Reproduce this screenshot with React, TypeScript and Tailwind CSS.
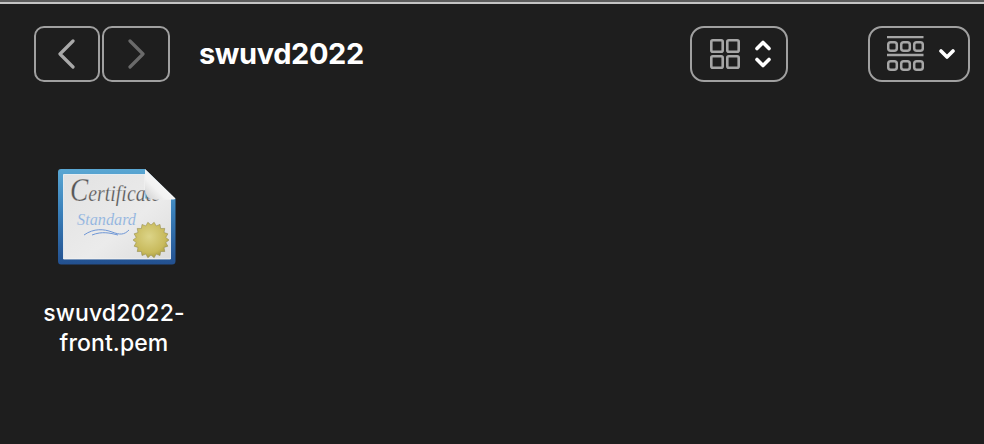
import React from "react";

function Nav({ dir, color, className }: { dir: "l" | "r"; color: string; className: string }) {
  return (
    <div className={`flex items-center justify-center border-2 border-[#a0a0a0] rounded-[10px] h-[56px] ${className}`}>
      <svg width="18" height="30" viewBox="0 0 18 30" fill="none">
        <path d={dir === "l" ? "M15 2 L2 15 L15 28" : "M3 2 L16 15 L3 28"} stroke={color} strokeWidth="3.2" strokeLinecap="round" strokeLinejoin="round" />
      </svg>
    </div>
  );
}

function GridIcon() {
  return (
    <svg width="30" height="30" viewBox="0 0 30 30" fill="none" stroke="#a6a6a6" strokeWidth="2.6">
      <rect x="1.3" y="1.3" width="11.4" height="11.4" rx="1.5" />
      <rect x="17.3" y="1.3" width="11.4" height="11.4" rx="1.5" />
      <rect x="1.3" y="17.3" width="11.4" height="11.4" rx="1.5" />
      <rect x="17.3" y="17.3" width="11.4" height="11.4" rx="1.5" />
    </svg>
  );
}

function UpDown() {
  return (
    <svg width="16" height="28" viewBox="0 0 16 28" fill="none" stroke="#ffffff" strokeWidth="3.6" strokeLinecap="round" strokeLinejoin="round">
      <path d="M2 8.5 L8 2.5 L14 8.5" />
      <path d="M2 19.5 L8 25.5 L14 19.5" />
    </svg>
  );
}

function GalleryIcon() {
  const row = (y: number) => (
    <g>
      <rect x="1.2" y={y} width="8.6" height="8.6" rx="2.5" />
      <rect x="14.2" y={y} width="8.6" height="8.6" rx="2.5" />
      <rect x="27.2" y={y} width="8.6" height="8.6" rx="2.5" />
    </g>
  );
  return (
    <svg width="37" height="36" viewBox="0 0 37 36" fill="none" stroke="#a6a6a6" strokeWidth="2.5">
      <path d="M0 1 H36.5" />
      {row(6.2)}
      <path d="M0 19 H36.5" />
      {row(25.2)}
    </svg>
  );
}

function Chevron() {
  return (
    <svg width="16" height="10" viewBox="0 0 16 10" fill="none" stroke="#ffffff" strokeWidth="3.6" strokeLinecap="round" strokeLinejoin="round">
      <path d="M2 2 L8 8 L14 2" />
    </svg>
  );
}

function CertIcon() {
  const pts: string[] = [];
  const cx = 93;
  const cy = 72;
  const n = 18;
  for (let i = 0; i < n * 2; i++) {
    const r = i % 2 === 0 ? 18 : 15;
    const a = (i * Math.PI) / n;
    pts.push(`${(cx + r * Math.cos(a)).toFixed(2)},${(cy + r * Math.sin(a)).toFixed(2)}`);
  }
  return (
    <svg width="120" height="100" viewBox="0 0 120 100" className="block">
      <defs>
        <linearGradient id="frame" x1="0" y1="0" x2="0" y2="1">
          <stop offset="0" stopColor="#5aa7d3" />
          <stop offset="0.45" stopColor="#3a80ba" />
          <stop offset="1" stopColor="#23508f" />
        </linearGradient>
        <linearGradient id="paper" x1="0" y1="0" x2="1" y2="1">
          <stop offset="0" stopColor="#e2e2e2" />
          <stop offset="0.6" stopColor="#ebebeb" />
          <stop offset="1" stopColor="#dcdcdc" />
        </linearGradient>
        <linearGradient id="fold" x1="0" y1="1" x2="1" y2="0">
          <stop offset="0" stopColor="#cfcfcf" />
          <stop offset="0.35" stopColor="#f2f2f2" />
          <stop offset="1" stopColor="#ffffff" />
        </linearGradient>
        <radialGradient id="seal" cx="0.45" cy="0.4" r="0.65">
          <stop offset="0" stopColor="#dcd488" />
          <stop offset="0.7" stopColor="#c8ba5c" />
          <stop offset="1" stopColor="#a39840" />
        </radialGradient>
      </defs>
      <path d="M3 1 Q0 1 0 4 V93 Q0 96.5 3 96.5 H114 Q117.5 96.5 117.5 93 V31 L87 1 Z" fill="url(#frame)" />
      <path d="M5.5 6.5 H87 V31 H112.5 V91 H5.5 Z" fill="url(#paper)" stroke="#f6f6f6" strokeWidth="0.8" />
      <text x="12" y="33" fontFamily="'Liberation Serif', serif" fontStyle="italic" fontSize="24" fill="#555555" stroke="#e6e6e6" strokeWidth="0.25" textLength="90" lengthAdjust="spacingAndGlyphs">
        <tspan fontSize="33">C</tspan>ertificate
      </text>
      <text x="19" y="57" fontFamily="'Liberation Serif', serif" fontStyle="italic" fontSize="16" fill="#86aee0" stroke="#e6e6e6" strokeWidth="0.2" textLength="59" lengthAdjust="spacingAndGlyphs">Standard</text>
      <path d="M26 67 C36 60 46 61 54 64 S66 67 71 62 M34 67 C44 63 52 65 60 67" fill="none" stroke="#6f97d6" strokeWidth="1" />
      <polygon points={pts.join(" ")} fill="url(#seal)" stroke="#8d8445" strokeWidth="0.5" />
      <path d="M87 1 L117.5 30.5 Q117 31.5 115 31.5 H96 Q87 31 87 21 Z" fill="url(#fold)" />
    </svg>
  );
}

export default function App() {
  return (
    <div className="w-[984px] h-[444px] bg-[#1e1e1e] overflow-hidden text-white" style={{ fontFamily: "Inter, sans-serif" }}>
      <div className="h-[2px] bg-[#5c5c5c]" />
      <div className="h-[2px] bg-[#c4c4c4]" />
      <div className="flex items-center pl-[34px] pr-[14px] pt-[22px]">
        <Nav dir="l" color="#a9a9a9" className="w-[66px]" />
        <Nav dir="r" color="#6a6a6a" className="w-[68px] ml-[2px]" />
        <div className="ml-[29px] text-[29px] font-bold leading-[32px] tracking-[-0.4px]">swuvd2022</div>
        <div className="ml-[326px] w-[98px] h-[56px] border-2 border-[#a0a0a0] rounded-[14px] flex items-center pl-[18px] gap-[15px]">
          <GridIcon />
          <UpDown />
        </div>
        <div className="ml-[80px] w-[102px] h-[56px] border-2 border-[#a0a0a0] rounded-[14px] flex items-center pl-[17px] gap-[15px]">
          <GalleryIcon />
          <Chevron />
        </div>
      </div>
      <div className="pl-[36px] pt-[86px] w-[192px] flex flex-col items-center">
        <div className="ml-[8px]"><CertIcon /></div>
        <div className="mt-[30px] text-[23px] font-medium leading-[30px] text-center tracking-[0.1px]">
          <div>swuvd2022-</div>
          <div>front.pem</div>
        </div>
      </div>
    </div>
  );
}
